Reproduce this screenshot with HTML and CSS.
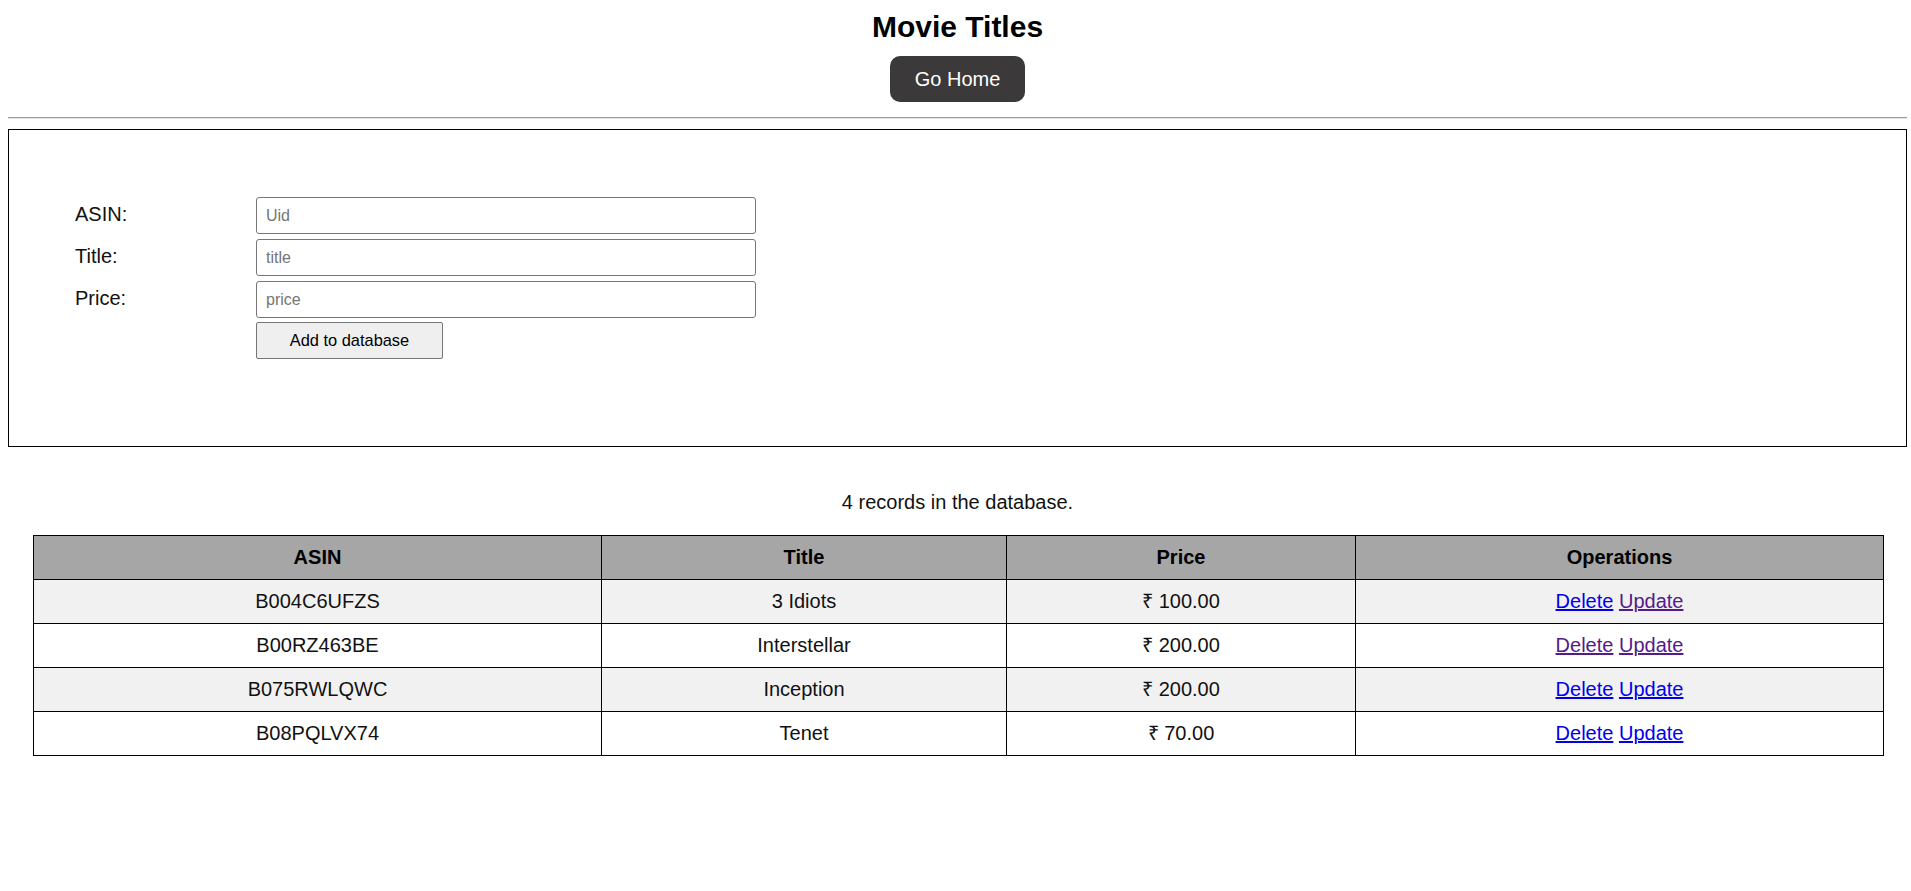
FILE: index.html
```html
<!DOCTYPE html>
<html lang="en">
<head>
<meta charset="utf-8">
<title>Movie Titles</title>
<link rel="stylesheet" href="styles.css">
</head>
<body>
<header class="top">
  <h1 class="title">Movie Titles</h1>
  <a class="home-btn" href="#">Go Home</a>
</header>
<hr class="divider">
<section class="form-box">
  <form class="add-form">
    <label class="field-label" for="asin">ASIN:</label>
    <input class="field-input" id="asin" type="text" placeholder="Uid">
    <label class="field-label" for="title">Title:</label>
    <input class="field-input" id="title" type="text" placeholder="title">
    <label class="field-label" for="price">Price:</label>
    <input class="field-input" id="price" type="text" placeholder="price">
    <span class="spacer"></span>
    <button class="add-btn" type="button">Add to database</button>
  </form>
</section>
<p class="count">4 records in the database.</p>
<table class="records">
  <colgroup>
    <col class="c-asin"><col class="c-title"><col class="c-price"><col class="c-ops">
  </colgroup>
  <thead>
    <tr><th>ASIN</th><th>Title</th><th>Price</th><th>Operations</th></tr>
  </thead>
  <tbody>
    <tr class="alt"><td>B004C6UFZS</td><td>3 Idiots</td><td>₹ 100.00</td><td><a class="link" href="#">Delete</a> <a class="link visited" href="#">Update</a></td></tr>
    <tr><td>B00RZ463BE</td><td>Interstellar</td><td>₹ 200.00</td><td><a class="link visited" href="#">Delete</a> <a class="link visited" href="#">Update</a></td></tr>
    <tr class="alt"><td>B075RWLQWC</td><td>Inception</td><td>₹ 200.00</td><td><a class="link" href="#">Delete</a> <a class="link" href="#">Update</a></td></tr>
    <tr><td>B08PQLVX74</td><td>Tenet</td><td>₹ 70.00</td><td><a class="link" href="#">Delete</a> <a class="link" href="#">Update</a></td></tr>
  </tbody>
</table>
</body>
</html>
```

FILE: styles.css
```css
html, body {
  background: #ffffff;
}
body {
  margin: 8px 4px 8px 8px;
  font-family: "Liberation Sans", Arial, sans-serif;
  font-size: 20px;
  color: #111;
}
.top {
  display: flex;
  flex-direction: column;
  align-items: center;
  padding-top: 2px;
}
.title {
  margin: 0;
  font-size: 30px;
  font-weight: bold;
  line-height: 34px;
  color: #000;
}
.home-btn {
  margin-top: 12px;
  display: inline-block;
  background: #3b3939;
  color: #fff;
  text-decoration: none;
  font-size: 20px;
  line-height: 23px;
  padding: 12px 25px 11px;
  border-radius: 10px;
}
.divider {
  margin: 15px 0 10px;
  border: 0;
  border-top: 1px solid #9a9a9a;
  border-bottom: 1px solid #e4e4e4;
  height: 0;
}
.form-box {
  box-sizing: border-box;
  border: 1px solid #000;
  padding: 67px 0 87px 66px;
}
.add-form {
  display: grid;
  grid-template-columns: 181px 500px;
  row-gap: 5px;
  align-items: center;
}
.field-label {
  font-size: 20px;
  color: #111;
  margin-top: -2px;
}
.field-input {
  box-sizing: border-box;
  width: 500px;
  height: 37px;
  margin: 0;
  border: 1px solid #767676;
  border-radius: 3px;
  padding: 0 9px;
  font-family: "Liberation Sans", Arial, sans-serif;
  font-size: 16px;
  color: #000;
}
.field-input::placeholder {
  color: #757575;
}
.add-btn {
  box-sizing: border-box;
  justify-self: start;
  width: 187px;
  height: 37px;
  margin: -1px 0 0;
  background: #efefef;
  border: 1px solid #767676;
  border-radius: 2px;
  font-family: "Liberation Sans", Arial, sans-serif;
  font-size: 16.4px;
  color: #000;
}
.count {
  margin: 44px 0 21px;
  text-align: center;
  line-height: 23px;
}
.records {
  margin: 0 0 0 25px;
  width: 1850px;
  table-layout: fixed;
  border-collapse: collapse;
  border: 1px solid #000;
}
.c-asin { width: 568px; }
.c-title { width: 405px; }
.c-price { width: 349px; }
.c-ops { width: 528px; }
.records th,
.records td {
  border: 1px solid #000;
  padding: 10px 8px;
  height: 23px;
  line-height: 23px;
  text-align: center;
  font-size: 20px;
}
.records th {
  background: #a6a6a6;
  font-weight: bold;
  color: #000;
}
.records td {
  color: #111;
}
.records tr.alt td {
  background: #f1f1f1;
}
.link {
  color: #0000ee;
  text-decoration: underline;
}
.link.visited {
  color: #551a8b;
}
```
